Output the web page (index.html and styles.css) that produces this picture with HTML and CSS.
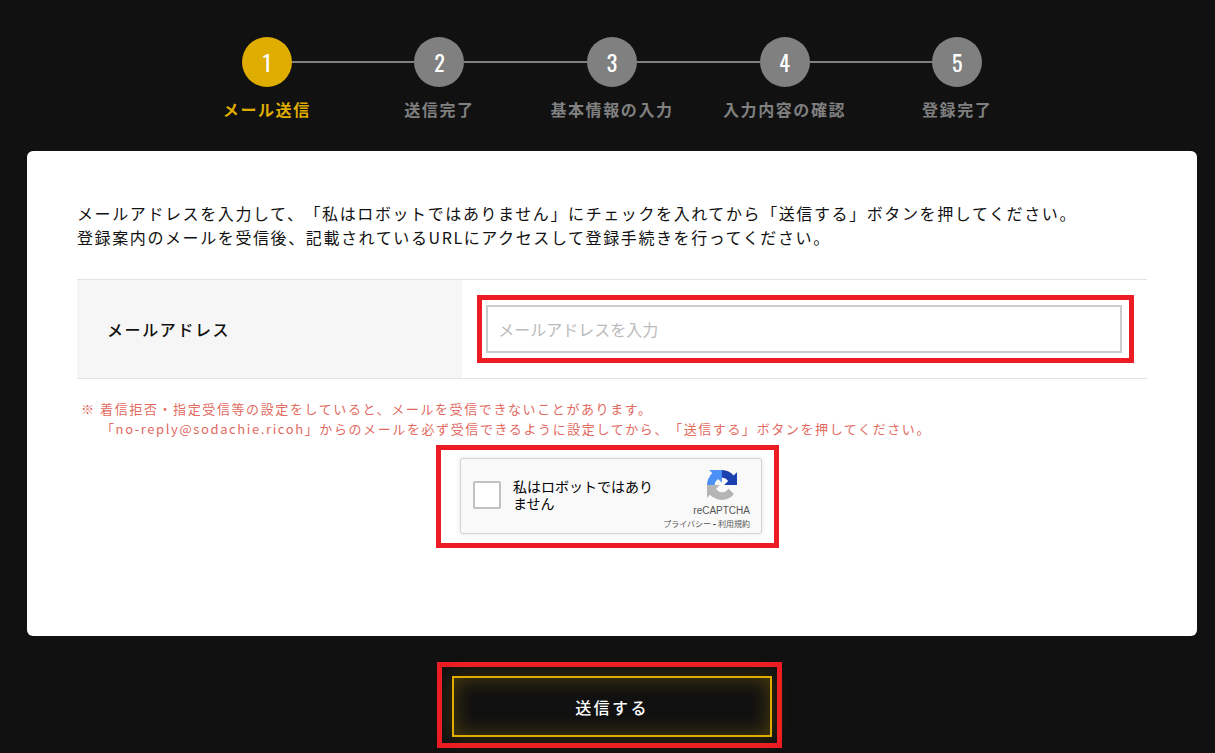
FILE: index.html
```html
<!DOCTYPE html>
<html lang="ja">
<head>
  <meta charset="UTF-8" />
  <meta name="viewport" content="width=device-width, initial-scale=1.0"/>
  <title>会員登録 - メール送信</title>
  <link rel="stylesheet" href="styles.css">
</head>
<body>

<main class="page">
  <ol class="steps">
    <li class="step active">
      <div class="step-mark"><span class="step-num">1</span></div>
      <p class="step-label">メール送信</p>
    </li>
    <li class="step">
      <div class="step-mark"><span class="step-num">2</span></div>
      <p class="step-label">送信完了</p>
    </li>
    <li class="step">
      <div class="step-mark"><span class="step-num">3</span></div>
      <p class="step-label">基本情報の入力</p>
    </li>
    <li class="step">
      <div class="step-mark"><span class="step-num">4</span></div>
      <p class="step-label">入力内容の確認</p>
    </li>
    <li class="step">
      <div class="step-mark"><span class="step-num">5</span></div>
      <p class="step-label">登録完了</p>
    </li>
  </ol>

  <form onsubmit="return false">
    <div class="card">
      <p class="lead">
        メールアドレスを入力して、「私はロボットではありません」にチェックを入れてから「送信する」ボタンを押してください。<br>
        登録案内のメールを受信後、記載されているURLにアクセスして登録手続きを行ってください。
      </p>

      <table class="form-table">
        <tr>
          <th scope="row"><label for="email">メールアドレス</label></th>
          <td>
            <div class="mark mark-input">
              <input type="email" id="email" class="text-input" placeholder="メールアドレスを入力" />
            </div>
          </td>
        </tr>
      </table>

      <p class="note">※ 着信拒否・指定受信等の設定をしていると、メールを受信できないことがあります。<br><span class="note-next">「no-reply@sodachie.ricoh」からのメールを必ず受信できるように設定してから、「送信する」ボタンを押してください。</span></p>

      <div class="captcha-area">
        <div class="mark mark-captcha">
          <div class="captcha">
            <input type="checkbox" id="robot" class="captcha-check" />
            <label for="robot" class="captcha-label">私はロボットではありません</label>
            <div class="captcha-brand">
              <svg class="captcha-logo" viewBox="0 0 64 64" aria-hidden="true">
                <path fill="#1c40b0" d="M64 31.955l-.033-1.37V4.687l-7.16 7.16C50.948 4.674 42.033.093 32.05.093c-10.4 0-19.622 4.96-25.458 12.64l11.736 11.86a15.55 15.55 0 0 1 4.754-5.334c2.05-1.6 4.952-2.906 8.968-2.906.485 0 .86.057 1.135.163 4.976.393 9.288 3.14 11.828 7.124l-8.307 8.307L64 31.953"/>
                <path fill="#4a90f5" d="M31.862.094l-1.37.033H4.594l7.16 7.16C4.58 13.147 0 22.06 0 32.046c0 10.4 4.96 19.622 12.64 25.458L24.5 45.768a15.55 15.55 0 0 1-5.334-4.754c-1.6-2.05-2.906-4.952-2.906-8.968 0-.485.057-.86.163-1.135.393-4.976 3.14-9.288 7.124-11.828l8.307 8.307L31.86.095"/>
                <path fill="#b5b5b5" d="M.001 32.045l.033 1.37v25.898l7.16-7.16c5.86 7.173 14.774 11.754 24.76 11.754 10.4 0 19.622-4.96 25.458-12.64l-11.736-11.86a15.55 15.55 0 0 1-4.754 5.334c-2.05 1.6-4.952 2.906-8.968 2.906-.485 0-.86-.057-1.135-.163-4.976-.393-9.288-3.14-11.828-7.124l8.307-8.307c-10.522.04-22.4.066-27.295-.005"/>
              </svg>
              <span class="captcha-name">reCAPTCHA</span>
              <div class="captcha-links"><a href="#">プライバシー</a><span class="captcha-dash">-</span><a href="#">利用規約</a></div>
            </div>
          </div>
        </div>
      </div>
    </div>

    <div class="submit-area">
      <div class="mark mark-submit">
        <button type="submit" class="submit-btn">送信する</button>
      </div>
    </div>
  </form>
</main>

</body>
</html>
```
FILE: styles.css
```css
* {
  box-sizing: border-box;
}

body {
  margin: 0;
  background: #111111;
  color: #111111;
  font-family: "Noto Sans CJK JP", sans-serif;
  font-size: 16px;
  line-height: 24px;
  letter-spacing: 0.1em;
  text-spacing-trim: space-all;
}

p {
  margin: 0;
}

.page {
  padding: 37px 18px 5px 27px;
}

/* progress */
.steps {
  display: flex;
  max-width: 863px;
  margin: 0 auto;
  padding: 0;
  list-style: none;
}

.step {
  flex: 1;
  text-align: center;
  color: #808080;
}

.step-mark {
  display: flex;
  align-items: center;
}

.step-mark::before,
.step-mark::after {
  content: "";
  flex: 1;
  height: 2px;
  background: #808080;
}

.step:first-child .step-mark::before,
.step:last-child .step-mark::after {
  background: none;
}

.step-num {
  width: 50px;
  height: 50px;
  border-radius: 50%;
  background: #808080;
  color: #ffffff;
  font-family: "Oswald", "Liberation Sans Narrow", sans-serif;
  font-size: 22px;
  line-height: 50px;
  letter-spacing: 0;
}

.step-label {
  margin-top: 10px;
  font-weight: bold;
  white-space: nowrap;
}

.active .step-num {
  background: #dfac00;
}

.active .step-label {
  color: #dfac00;
}

/* form card */
.card {
  margin-top: 30px;
  padding: 50px 50px 88px;
  background: #ffffff;
  border-radius: 6px;
}

.form-table {
  width: 100%;
  margin-top: 30px;
  border-collapse: separate;
  border-spacing: 0;
}

.form-table th,
.form-table td {
  border-top: 1px solid #e2e2e2;
  border-bottom: 1px solid #e2e2e2;
}

.form-table th {
  width: 36%;
  padding: 15px 30px;
  background: #f6f6f6;
  font-weight: 500;
  text-align: left;
}

.form-table td {
  padding: 15px 13px 15px 15px;
}

.text-input {
  display: block;
  width: 100%;
  height: 48px;
  padding: 0 10px;
  border: 2px solid #cccccc;
  border-radius: 0;
  background: #ffffff;
  font-family: inherit;
  font-size: 16px;
}

.text-input::placeholder {
  color: #bbbbbb;
}

.note {
  margin-top: 20px;
  padding-left: 4px;
  color: #e26a5f;
  font-size: 13px;
  line-height: 20px;
}

.note-next {
  padding-left: 20px;
}

/* red frames around the places to fill in */
.mark {
  border: 5px solid #ed1c24;
}

.mark-input {
  padding: 5px 7px 5px 4px;
}

.mark-captcha {
  padding: 8px 12px 9px 19px;
}

.mark-submit {
  padding: 9px 5px 6px 10px;
}

/* captcha */
.captcha-area {
  display: flex;
  justify-content: center;
  margin-top: 6px;
  padding-right: 9px;
}

.captcha {
  display: flex;
  width: 302px;
  height: 76px;
  padding: 0 11px 0 12px;
  border: 1px solid #d3d3d3;
  border-radius: 3px;
  background: #f9f9f9;
  box-shadow: 0 0 4px 1px rgba(0, 0, 0, 0.08);
  letter-spacing: 0;
}

.captcha-check {
  appearance: none;
  flex: none;
  width: 28px;
  height: 28px;
  margin: 22px 0 0;
  border: 2px solid #c1c1c1;
  border-radius: 2px;
  background: #ffffff;
}

.captcha-check:checked {
  background: #4285f4;
}

.captcha-label {
  flex: none;
  width: 152px;
  margin-top: 19px;
  padding-left: 12px;
  color: #000000;
  font-size: 14px;
  line-height: 17px;
}

.captcha-brand {
  display: flex;
  flex: 1;
  flex-direction: column;
  align-items: flex-end;
  padding-top: 11px;
  color: #555555;
  white-space: nowrap;
}

.captcha-logo {
  width: 30px;
  height: 30px;
  margin-right: 13px;
}

.captcha-name {
  margin-top: 4px;
  font-family: "Liberation Sans", Arial, sans-serif;
  font-size: 10px;
  line-height: 14px;
}

.captcha-links {
  font-size: 8px;
  line-height: 12px;
}

.captcha-links a {
  color: #555555;
  text-decoration: none;
}

.captcha-dash {
  padding: 0 2px;
  color: #000000;
  font-weight: bold;
}

/* submit */
.submit-area {
  display: flex;
  justify-content: center;
  margin-top: 26px;
  padding-right: 5px;
}

.submit-btn {
  display: block;
  width: 320px;
  height: 61px;
  border: 2px solid #dfac00;
  background: #111111;
  box-shadow: 0 0 20px rgba(223, 172, 0, 0.2), inset 0 0 20px rgba(223, 172, 0, 0.3);
  color: #ffffff;
  font-family: inherit;
  font-size: 16px;
  font-weight: 500;
  letter-spacing: 0.15em;
  cursor: pointer;
}

.submit-btn:hover {
  background: #2b2407;
}
```
